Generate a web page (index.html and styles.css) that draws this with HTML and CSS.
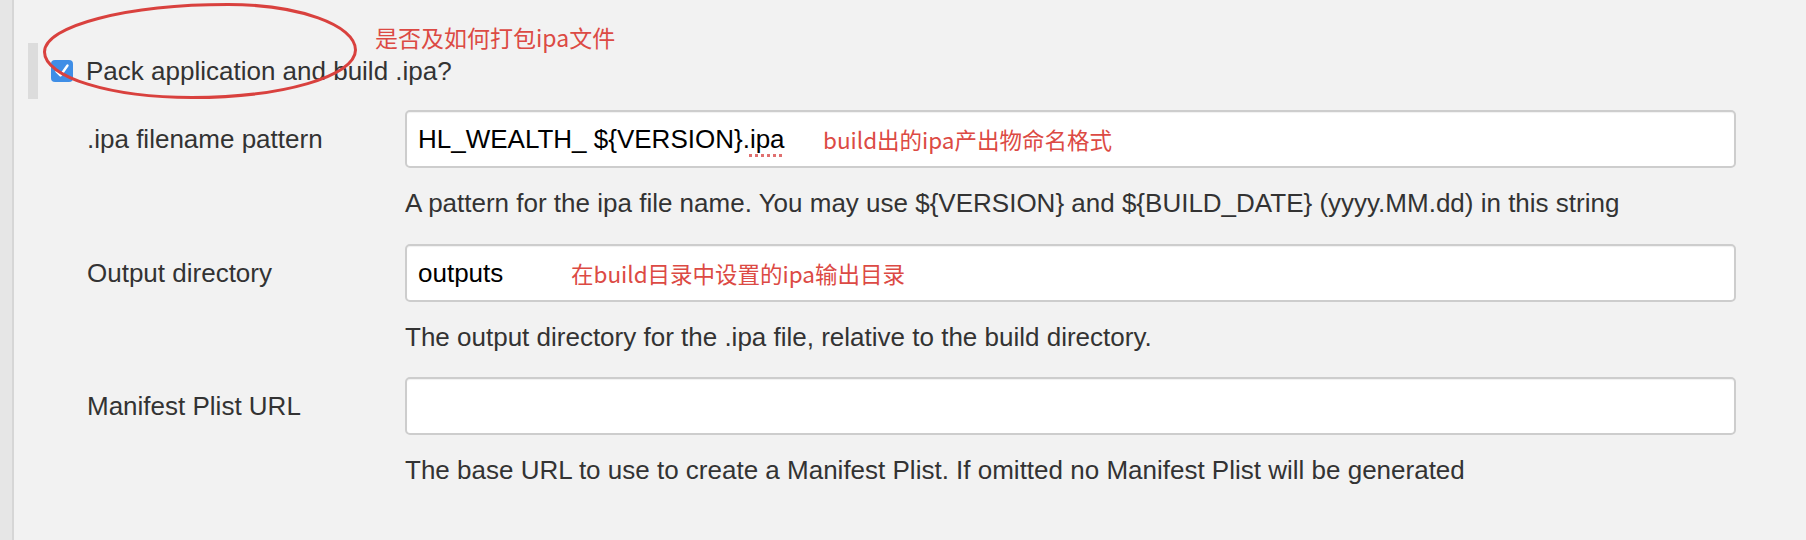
FILE: index.html
```html
<!DOCTYPE html>
<html lang="en">
<head>
<meta charset="utf-8">
<title>Pack application</title>
<link rel="stylesheet" href="styles.css">
</head>
<body>
<div class="page">
  <div class="rail"></div>
  <main class="content">
    <div class="section-head">
      <span class="checkbox">
        <svg width="22" height="22" viewBox="0 0 22 22"><path d="M5.5 11.5 L9.5 15.5 L16.5 5.5" fill="none" stroke="#fff" stroke-width="2.4" stroke-linecap="round" stroke-linejoin="round"/></svg>
      </span>
      <span class="section-title">Pack application and build .ipa?</span>
    </div>

    <div class="form">
      <div class="label">.ipa filename pattern</div>
      <div class="input"><span class="value">HL_WEALTH_ ${VERSION}.<span class="spell">ipa</span></span><span class="note note-1">build出的ipa产出物命名格式</span></div>
      <div class="help">A pattern for the ipa file name. You may use ${VERSION} and ${BUILD_DATE} (yyyy.MM.dd) in this string</div>

      <div class="label">Output directory</div>
      <div class="input"><span class="value">outputs</span><span class="note note-2">在build目录中设置的ipa输出目录</span></div>
      <div class="help">The output directory for the .ipa file, relative to the build directory.</div>

      <div class="label">Manifest Plist URL</div>
      <div class="input"></div>
      <div class="help">The base URL to use to create a Manifest Plist. If omitted no Manifest Plist will be generated</div>
    </div>

    <span class="note note-head">是否及如何打包ipa文件</span>
    <svg class="circle" width="400" height="110" viewBox="0 0 400 110">
      <path d="M44.5 52 C44.5 25.8 126.7 4.5 228 4.5 C298.4 4.5 355.5 24.9 355.5 50 C355.5 76.2 282.3 97.5 192 97.5 C110.5 97.5 44.5 77.1 44.5 52 Z" fill="none" stroke="#d9413e" stroke-width="3"/>
    </svg>
  </main>
</div>
</body>
</html>
```
FILE: styles.css
```css
html, body {
  margin: 0;
  padding: 0;
  background: #f2f2f2;
}

body {
  font-family: "Liberation Sans", Arial, sans-serif;
  font-size: 26px;
  line-height: 30px;
  color: #333;
}

.page {
  display: flex;
  min-height: 540px;
}

.rail {
  width: 12px;
  flex: none;
  background: #e6e6e6;
  border-right: 2px solid #d6d6d6;
}

.content {
  position: relative;
  flex: 1;
}

.section-head {
  margin: 43px 0 0 14px;
  height: 56px;
  border-left: 10px solid #dcdcdc;
  padding-left: 13px;
  display: flex;
  align-items: center;
  gap: 13px;
}

.checkbox {
  width: 22px;
  height: 22px;
  border-radius: 4px;
  background: #3f8ee6;
  display: flex;
  align-items: center;
  justify-content: center;
}

.checkbox svg {
  display: block;
}

.form {
  margin: 11px 0 0 73px;
  display: grid;
  grid-template-columns: 318px 1331px;
}

.label {
  height: 58px;
  display: flex;
  align-items: center;
}

.input {
  position: relative;
  box-sizing: border-box;
  height: 58px;
  border: 2px solid #cdcdcd;
  border-radius: 5px;
  background: #fff;
  box-shadow: inset 0 1px 1px rgba(0, 0, 0, 0.06);
  padding: 0 11px;
  display: flex;
  align-items: center;
  color: #000;
  white-space: nowrap;
}

.help {
  grid-column: 2;
  margin: 20px 0 25.5px;
}

.spell {
  text-decoration: underline dotted #e07070;
  text-decoration-thickness: 3px;
  text-underline-offset: 6px;
}

.note {
  font-family: "Noto Sans CJK SC", "Liberation Sans", sans-serif;
  font-size: 22.5px;
  line-height: 1;
  color: #dc4a44;
  white-space: nowrap;
}

.note-1,
.note-2 {
  position: absolute;
  top: 50%;
  transform: translateY(-50%);
}

.note-1 {
  left: 416px;
}

.note-2 {
  left: 164px;
}

.note-head {
  position: absolute;
  left: 361px;
  top: 26px;
  font-size: 23px;
}

.circle {
  position: absolute;
  left: -14px;
  top: 0;
  pointer-events: none;
  overflow: visible;
}
```
